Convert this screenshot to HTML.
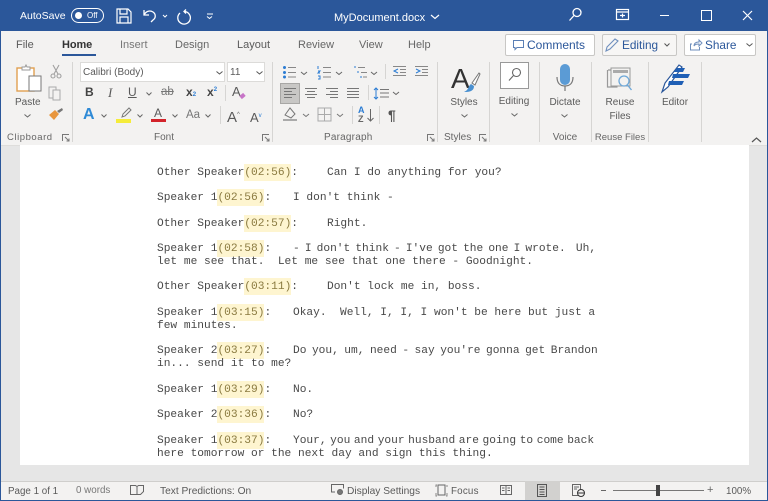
<!DOCTYPE html>
<html><head><meta charset="utf-8"><style>
html,body{margin:0;padding:0}
body{width:768px;height:501px;overflow:hidden;position:relative;background:#f3f2f1;font-family:"Liberation Sans",sans-serif;color:#555}
#w{position:absolute;left:0;top:0;width:768px;height:501px;filter:blur(.3px);overflow:hidden}
.a{position:absolute;white-space:nowrap}
.t{position:absolute;white-space:nowrap;font-size:10.5px;line-height:13px;color:#5a5a5a}
.c{transform:translateX(-50%)}
.sep{position:absolute;width:1px;background:#d6d5d3}
svg{position:absolute;overflow:visible}
.doc{position:absolute;left:157px;font:11.2px/13px "Liberation Mono",monospace;color:#484848;white-space:pre}
.doc b{font-weight:normal;background:#fef5d0;color:#8a7a40;padding:3px 0 2px}
.doc i{font-style:normal;position:absolute}
.wt{color:#fff}
.box{position:absolute;background:#fff;border:1px solid #c8c7c5;box-sizing:border-box}
</style></head><body><div id="w">
<!-- title bar -->
<div class="a" style="left:0;top:0;width:768px;height:31px;background:#2b579a"></div>
<div class="a wt" style="left:20px;top:9px;font-size:10.5px;line-height:14px">AutoSave</div>
<div class="a" style="left:71px;top:8px;width:33px;height:15px;border:1px solid #fff;border-radius:8px;box-sizing:border-box"></div>
<div class="a" style="left:75px;top:12px;width:7px;height:7px;background:#fff;border-radius:50%"></div>
<div class="a wt" style="left:87px;top:10px;font-size:8px;line-height:11px">Off</div>
<svg style="left:116px;top:8px" width="16" height="16" fill="none" stroke="#fff" stroke-width="1.2"><path d="M1 1h11l3 3v11H1zM4 1v5h7V1M4 15V9h8v6"/></svg>
<svg style="left:142px;top:8px" width="26" height="16" fill="none" stroke="#fff" stroke-width="1.3"><path d="M2 2v5h5M2 7c2-4 6-5 9-3 3 2 3 6 0 8l-2 2"/><path d="M21 7l2 2 2-2" stroke-width="1"/></svg>
<svg style="left:176px;top:8px" width="17" height="17" fill="none" stroke="#fff" stroke-width="1.3"><path d="M10 1.500l-2 2 2 2M8 3.500a6.300 6.300 0 1 1-4 1.500"/></svg>
<svg style="left:206px;top:13px" width="9" height="7" fill="none" stroke="#fff" stroke-width="1"><path d="M1 1h6M1 3.500l2.500 2 2.500-2"/></svg>
<div class="a wt" style="left:334px;top:11px;font-size:11px;line-height:14px">MyDocument.docx</div>
<svg style="left:430px;top:14px" width="10" height="6" fill="none" stroke="#fff" stroke-width="1.2"><path d="M1 1l4 3.500L9 1"/></svg>
<svg style="left:568px;top:7px" width="15" height="15" fill="none" stroke="#fff" stroke-width="1.3"><circle cx="9" cy="5.500" r="4"/><path d="M6 8.500L1.500 13.500"/></svg>
<svg style="left:616px;top:9px" width="14" height="12" fill="none" stroke="#fff" stroke-width="1.2"><rect x=".5" y=".5" width="12" height="10"/><path d="M.5 3h12M4 6.500h5M6.500 4.500v4"/></svg>
<div class="a" style="left:660px;top:15px;width:9px;height:1.3px;background:#fff"></div>
<div class="a" style="left:701px;top:10px;width:9px;height:9px;border:1.2px solid #fff"></div>
<svg style="left:742px;top:10px" width="11" height="11" stroke="#fff" stroke-width="1.2"><path d="M1 1l9 9M10 1l-9 9"/></svg>
<!-- tabs -->
<div class="a" style="left:1px;top:31px;width:766px;height:114px;background:#f3f2f1"></div>
<div class="t" style="left:16px;top:39px;font-size:11px">File</div>
<div class="t" style="left:62px;top:39px;font-size:11px;color:#333;font-weight:bold;letter-spacing:-.1px">Home</div>
<div class="a" style="left:62px;top:54px;width:34px;height:2px;background:#2b579a"></div>
<div class="t" style="left:120px;top:39px;font-size:11px;color:#777">Insert</div>
<div class="t" style="left:175px;top:39px;font-size:11px;color:#666">Design</div>
<div class="t" style="left:237px;top:39px;font-size:11px">Layout</div>
<div class="t" style="left:298px;top:39px;font-size:11px;color:#666">Review</div>
<div class="t" style="left:359px;top:39px;font-size:11px;color:#666">View</div>
<div class="t" style="left:408px;top:39px;font-size:11px;color:#666">Help</div>
<!-- top right buttons -->
<div class="box" style="left:505px;top:34px;width:90px;height:22px;border-radius:2px"></div>
<svg style="left:513px;top:40px" width="12" height="11" fill="none" stroke="#5a7fb5"><path d="M.5.5h10v7H4l-2 2v-2H.5z"/></svg>
<div class="t" style="left:527px;top:39px;font-size:12px;color:#2b579a">Comments</div>
<div class="box" style="left:602px;top:34px;width:75px;height:22px;border-radius:2px;background:#f7f6f5"></div>
<svg style="left:604px;top:37px" width="16" height="16" fill="none" stroke="#6f8fbd" stroke-width="1.1"><path d="M2 14l1-4 8-8 3 2-8 8z"/></svg>
<div class="t" style="left:622px;top:39px;font-size:11.8px;color:#2b579a">Editing</div>
<svg style="left:664px;top:43px" width="6" height="4" fill="none" stroke="#555"><path d="M.5.5L3 3l2.500-2.500"/></svg>
<div class="box" style="left:684px;top:34px;width:72px;height:22px;border-radius:2px"></div>
<svg style="left:690px;top:39px" width="13" height="12" fill="none" stroke="#6f8fbd"><path d="M2 5H.5v6h9V8M4 7c0-3 2-4 5-4V1l3 3-3 3V5C7 5 5 5 4 7z"/></svg>
<div class="t" style="left:705px;top:39px;font-size:11.8px;color:#2b579a">Share</div>
<svg style="left:746px;top:43px" width="7" height="4" fill="none" stroke="#555"><path d="M.5.5L3.500 3l3-2.500"/></svg>
<!-- ribbon: clipboard -->
<svg style="left:16px;top:65px" width="26" height="30"><rect x="1" y="3" width="17" height="23" fill="#fff" stroke="#e0a050" stroke-width="1.4"/><path d="M6 5V2h3l1-2 1 2h3v3z" fill="#fff" stroke="#9a9a9a"/><rect x="13" y="11" width="12" height="15" fill="#fff" stroke="#777"/></svg>
<div class="t" style="left:15px;top:96px;font-size:10px">Paste</div>
<svg style="left:24px;top:114px" width="7" height="4" fill="none" stroke="#666"><path d="M.5.5l3 2.500 3-2.500"/></svg>
<svg style="left:50px;top:64px" width="12" height="15" fill="none" stroke="#a0a0a0" stroke-width="1.1"><path d="M3 1l5 9M9 1L4 10"/><circle cx="3" cy="12" r="2"/><circle cx="9" cy="12" r="2"/></svg>
<svg style="left:48px;top:86px" width="15" height="15" fill="none" stroke="#aaa"><path d="M1 1h7v3h3v8H1z"/><path d="M5 4h7v10H5z" fill="#f3f2f1"/></svg>
<svg style="left:48px;top:107px" width="16" height="14"><path d="M1 8l6-5 4 4-5 6z" fill="#e8963e"/><path d="M9 4l5-3 1 2-4 3z" fill="#777"/></svg>
<div class="t" style="left:7px;top:131px;font-size:9.5px;letter-spacing:.55px;color:#666">Clipboard</div>
<svg style="left:62px;top:134px" width="8" height="8" fill="none" stroke="#777"><path d="M.5 7V.5H7M3 3l4 4M7 4.500V7H4.500"/></svg>
<div class="sep" style="left:72px;top:62px;height:80px"></div>
<!-- font -->
<div class="box" style="left:80px;top:62px;width:145px;height:20px;border-color:#dcdbd9"></div>
<div class="t" style="left:83px;top:66px;font-size:10px">Calibri (Body)</div>
<svg style="left:216px;top:71px" width="7" height="4" fill="none" stroke="#555"><path d="M.5.5l3 2.500 3-2.500"/></svg>
<div class="box" style="left:227px;top:62px;width:38px;height:20px;border-color:#dcdbd9"></div>
<div class="t" style="left:230px;top:66px;font-size:10px">11</div>
<svg style="left:256px;top:71px" width="7" height="4" fill="none" stroke="#555"><path d="M.5.5l3 2.500 3-2.500"/></svg>
<div class="t" style="left:85px;top:86px;font-size:12px;font-weight:bold;color:#444">B</div>
<div class="t" style="left:108px;top:86px;font-style:italic;font-family:'Liberation Serif',serif;font-size:13px">I</div>
<div class="t" style="left:128px;top:86px;font-size:12px;text-decoration:underline">U</div>
<svg style="left:146px;top:92px" width="6" height="4" fill="none" stroke="#666"><path d="M.5.5L3 3l2.500-2.500"/></svg>
<div class="t" style="left:161px;top:86px;font-size:11.5px;text-decoration:line-through;color:#777">ab</div>
<div class="t" style="left:186px;top:86px;font-size:12px;font-weight:bold;color:#444">x<span style="font-size:6px;color:#2b7cd3">2</span></div>
<div class="t" style="left:207px;top:86px;font-size:12px;font-weight:bold;color:#444">x<sup style="font-size:6px;color:#2b7cd3;line-height:0">2</sup></div>
<div class="sep" style="left:225px;top:85px;height:16px"></div>
<div class="t" style="left:232px;top:85px;font-size:13px">A</div>
<div class="a" style="left:240px;top:94px;width:5px;height:4px;background:#c774c7;transform:rotate(-40deg)"></div>
<div class="t" style="left:83px;top:106px;font-size:16px;line-height:18px;font-weight:bold;color:#2f8ad6">A</div>
<svg style="left:101px;top:114px" width="6" height="4" fill="none" stroke="#666"><path d="M.5.5L3 3l2.500-2.500"/></svg>
<svg style="left:119px;top:107px" width="14" height="11" fill="none" stroke="#777"><path d="M3 10l1-3 6-6 2 2-6 6z"/></svg>
<div class="a" style="left:116px;top:119px;width:15px;height:4px;background:#f5ec3a"></div>
<svg style="left:137px;top:114px" width="6" height="4" fill="none" stroke="#666"><path d="M.5.5L3 3l2.500-2.500"/></svg>
<div class="t" style="left:154px;top:106px;font-size:12px;line-height:14px">A</div>
<div class="a" style="left:151px;top:119px;width:15px;height:3px;background:#d3232a"></div>
<svg style="left:172px;top:114px" width="6" height="4" fill="none" stroke="#666"><path d="M.5.5L3 3l2.500-2.500"/></svg>
<div class="t" style="left:186px;top:109px;font-size:11.5px;color:#777">Aa</div>
<svg style="left:205px;top:114px" width="6" height="4" fill="none" stroke="#666"><path d="M.5.5L3 3l2.500-2.500"/></svg>
<div class="sep" style="left:220px;top:106px;height:18px"></div>
<div class="t" style="left:227px;top:107px;font-size:15px;line-height:16px">A<span style="font-size:6px;vertical-align:6px;color:#666">^</span></div>
<div class="t" style="left:250px;top:109px;font-size:13px;line-height:14px">A<span style="font-size:6px;vertical-align:5px;color:#2b7cd3">v</span></div>
<div class="t" style="left:154px;top:131px;font-size:10px;color:#666">Font</div>
<svg style="left:262px;top:134px" width="8" height="8" fill="none" stroke="#777"><path d="M.5 7V.5H7M3 3l4 4M7 4.500V7H4.500"/></svg>
<div class="sep" style="left:272px;top:62px;height:80px"></div>
<!-- paragraph row 1 -->
<svg style="left:282px;top:64px" width="120" height="16" fill="none" stroke="#888"><path d="M6 3.500h8M6 8.500h8M6 13h8M41 3.500h8M41 8.500h8M41 13h8M76 3.500h7M79 8.500h6M81 13h4"/><circle cx="2.500" cy="3.500" r="1.500" fill="#2b7cd3" stroke="none"/><circle cx="2.500" cy="8.500" r="1.500" fill="#2b7cd3" stroke="none"/><circle cx="2.500" cy="13" r="1.500" fill="#2b7cd3" stroke="none"/><path d="M36 2v3M36 7h2l-2 2h2M36 12h2v3h-2M72 3h2M75 8h2M78 13h2" stroke="#2b7cd3"/><path d="M19 8l3 2.500 3-2.500M54 8l3 2.500 3-2.500M89 8l3 2.500 3-2.500" stroke="#666"/></svg>
<div class="sep" style="left:385px;top:64px;height:15px"></div>
<svg style="left:393px;top:65px" width="36" height="14" fill="none" stroke="#888"><path d="M0 1.500h13M7 4.500h6M7 7.500h6M0 10.500h13M22 1.500h13M29 4.500h6M29 7.500h6M22 10.500h13"/><path d="M5 4L1 6l4 2M23 4l4 2-4 2" stroke="#2b7cd3"/></svg>
<!-- paragraph row 2 -->
<div class="a" style="left:280px;top:83px;width:20px;height:21px;background:#c8c7c5;border:1px solid #a8a7a5;box-sizing:border-box"></div>
<svg style="left:284px;top:88px" width="120" height="14" fill="none" stroke="#777"><path d="M0 .5h12M0 3.500h8M0 6.500h12M0 9.500h8"/><path d="M21 .5h12M23 3.500h8M21 6.500h12M23 9.500h8M42 .5h12M46 3.500h8M42 6.500h12M46 9.500h8M63 .5h12M63 3.500h12M63 6.500h12M63 9.500h12M96 1.500h9M96 5h9M96 9h9"/><path d="M92 0v11M90 2l2-2 2 2M90 9l2 2 2-2" stroke="#2b7cd3"/><path d="M109 4l3 2.500 3-2.500" stroke="#666"/></svg>
<div class="sep" style="left:368px;top:85px;height:15px"></div>
<!-- paragraph row 3 -->
<svg style="left:282px;top:106px" width="65" height="18" fill="none" stroke="#777"><path d="M3 9l5-7 5 6-4 4z"/><path d="M1 14h14" stroke="#aaa" stroke-width="2"/><path d="M21 8l3 2.500 3-2.500"/><path d="M36 2h13v13H36zM42.500 2v13M36 8.500h13" stroke="#aaa"/><path d="M55 8l3 2.500 3-2.500"/></svg>
<div class="sep" style="left:352px;top:106px;height:18px"></div>
<div class="sep" style="left:379px;top:106px;height:18px"></div>
<div class="t" style="left:358px;top:106px;font-size:9px;line-height:9px;font-weight:bold;color:#2b7cd3">A</div>
<div class="t" style="left:358px;top:115px;font-size:9px;line-height:9px;font-weight:bold;color:#666">Z</div>
<svg style="left:367px;top:109px" width="7" height="14" fill="none" stroke="#666"><path d="M3.500 0v12M.5 9l3 3 3-3"/></svg>
<div class="t" style="left:388px;top:107px;font-size:14px;line-height:16px;font-weight:bold;color:#555">¶</div>
<div class="t" style="left:324px;top:131px;font-size:10px;letter-spacing:.2px;color:#666">Paragraph</div>
<svg style="left:427px;top:134px" width="8" height="8" fill="none" stroke="#777"><path d="M.5 7V.5H7M3 3l4 4M7 4.500V7H4.500"/></svg>
<div class="sep" style="left:437px;top:62px;height:80px"></div>
<!-- styles -->
<div class="t" style="left:451px;top:64px;font-size:28px;line-height:30px;color:#333">A</div>
<svg style="left:463px;top:72px" width="18" height="22"><path d="M9 11l7-10 1 1-5 11z" fill="#fff" stroke="#777"/><path d="M1 20c4 0 10 0 10-6l-3-2C5 14 6 18 1 20z" fill="#4a90d0"/></svg>
<div class="t c" style="left:464px;top:96px;font-size:10px">Styles</div>
<svg style="left:461px;top:114px" width="7" height="4" fill="none" stroke="#666"><path d="M.5.5l3 2.500 3-2.500"/></svg>
<div class="t" style="left:444px;top:131px;font-size:10px;color:#666">Styles</div>
<svg style="left:479px;top:134px" width="8" height="8" fill="none" stroke="#777"><path d="M.5 7V.5H7M3 3l4 4M7 4.500V7H4.500"/></svg>
<div class="sep" style="left:489px;top:62px;height:80px"></div>
<!-- editing -->
<div class="box" style="left:500px;top:62px;width:29px;height:27px;border-color:#999"></div>
<svg style="left:507px;top:67px" width="15" height="15" fill="none" stroke="#666" stroke-width="1.1"><circle cx="9.500" cy="5.500" r="4"/><path d="M6.500 8.500L2 13.500"/></svg>
<div class="t c" style="left:514px;top:95px;font-size:10px">Editing</div>
<svg style="left:511px;top:113px" width="7" height="4" fill="none" stroke="#666"><path d="M.5.5l3 2.500 3-2.500"/></svg>
<div class="sep" style="left:539px;top:62px;height:80px"></div>
<!-- dictate -->
<svg style="left:555px;top:64px" width="20" height="28" fill="none"><rect x="5" y="0" width="10" height="21" rx="5" fill="#5b9bd5"/><path d="M2 13c0 6 3 9 8 9s8-3 8-9" stroke="#777" stroke-width="1.2"/><path d="M10 22v5" stroke="#777" stroke-width="1.2"/></svg>
<div class="t c" style="left:565px;top:96px;font-size:10px">Dictate</div>
<svg style="left:561px;top:114px" width="7" height="4" fill="none" stroke="#666"><path d="M.5.5l3 2.500 3-2.500"/></svg>
<div class="t c" style="left:565px;top:131px;font-size:10px;color:#666">Voice</div>
<div class="sep" style="left:591px;top:62px;height:80px"></div>
<!-- reuse -->
<svg style="left:607px;top:67px" width="29" height="27" fill="none" stroke="#999"><path d="M1 3h21M.5 3v17h10" stroke-width="1.2"/><rect x="4" y="1" width="19" height="18" fill="#f3f2f1" stroke="#999"/><rect x="6" y="3" width="15" height="3" fill="#aaa" stroke="none"/><circle cx="17" cy="14" r="5" stroke="#6fa8d8" stroke-width="1.3"/><path d="M20.500 18l4 5" stroke="#6fa8d8" stroke-width="1.4"/></svg>
<div class="t c" style="left:620px;top:96px;font-size:10px">Reuse</div>
<div class="t c" style="left:620px;top:110px;font-size:10px">Files</div>
<div class="t c" style="left:620px;top:131px;font-size:9.5px;color:#666">Reuse Files</div>
<div class="sep" style="left:648px;top:62px;height:80px"></div>
<!-- editor -->
<svg style="left:661px;top:64px" width="30" height="29"><path d="M1 28l3-9L18 1l3 2L7 23z" fill="#fff" stroke="#2b579a" stroke-width="1.2"/><path d="M12 10h17l-2 4H11zM8 17h15l-2 4H7zM16 4l8 0-2 4h-9z" fill="#1f5fb5"/></svg>
<div class="t c" style="left:675px;top:96px;font-size:10px">Editor</div>
<div class="sep" style="left:701px;top:62px;height:80px"></div>
<svg style="left:751px;top:136px" width="11" height="7" fill="none" stroke="#555" stroke-width="1.2"><path d="M1 6l4.500-4L10 6"/></svg>
<!-- document area -->
<div class="a" style="left:1px;top:145px;width:766px;height:1px;background:#dedddb"></div>
<div class="a" style="left:1px;top:146px;width:766px;height:335px;background:#e6e6e6"></div>
<div class="a" style="left:20px;top:145px;width:729px;height:320px;background:#fff"></div>
<div class="doc" style="top:167px">Other Speaker<b>(02:56)</b>:<i style="left:170px">Can I do anything for you?</i></div>
<div class="doc" style="top:192px">Speaker 1<b>(02:56)</b>:<i style="left:136px">I don't think -</i></div>
<div class="doc" style="top:218px">Other Speaker<b>(02:57)</b>:<i style="left:170px">Right.</i></div>
<div class="doc" style="top:243px">Speaker 1<b>(02:58)</b>:<i style="left:136px;word-spacing:-1.6px">- I don't think - I've got the one I wrote.  Uh,</i>
let me see that.  Let me see that one there - Goodnight.</div>
<div class="doc" style="top:281px">Other Speaker<b>(03:11)</b>:<i style="left:170px">Don't lock me in, boss.</i></div>
<div class="doc" style="top:307px">Speaker 1<b>(03:15)</b>:<i style="left:136px">Okay.  Well, I, I, I won't be here but just a</i>
few minutes.</div>
<div class="doc" style="top:345px">Speaker 2<b>(03:27)</b>:<i style="left:136px;word-spacing:-1.2px">Do you, um, need - say you're gonna get Brandon</i>
in... send it to me?</div>
<div class="doc" style="top:384px">Speaker 1<b>(03:29)</b>:<i style="left:136px">No.</i></div>
<div class="doc" style="top:409px">Speaker 2<b>(03:36)</b>:<i style="left:136px">No?</i></div>
<div class="doc" style="top:435px">Speaker 1<b>(03:37)</b>:<i style="left:136px;word-spacing:-3.1px">Your, you and your husband are going to come back</i>
here tomorrow or the next day and sign this thing.</div>
<!-- status bar -->
<div class="a" style="left:1px;top:481px;width:766px;height:19px;background:#f3f2f1;border-top:1px solid #cfcecc;box-sizing:border-box"></div>
<div class="t" style="left:8px;top:485px;font-size:9.8px">Page 1 of 1</div>
<div class="t" style="left:76px;top:484px;font-size:9.8px;color:#777">0 words</div>
<svg style="left:130px;top:485px" width="14" height="11" fill="none" stroke="#666"><path d="M.5.5h5l1.500 1 1.500-1h5v6l-3 3H7L5.500 9.500H.5zM7 1.500v8"/></svg>
<div class="t" style="left:160px;top:485px;font-size:10.2px">Text Predictions: On</div>
<svg style="left:331px;top:484px" width="14" height="12" fill="none" stroke="#666"><path d="M4 8H.5V.5h12v4"/><circle cx="9" cy="8" r="2.500" fill="#777"/></svg>
<div class="t" style="left:347px;top:485px;font-size:10.2px">Display Settings</div>
<svg style="left:435px;top:484px" width="13" height="13" fill="none" stroke="#666"><path d="M3 1h7v10H3z"/><path d="M1 3v-2h1M1 9v3h1M12 3v-2M12 9v3h-1" stroke="#888"/></svg>
<div class="t" style="left:451px;top:485px;font-size:9.8px;letter-spacing:.2px">Focus</div>
<svg style="left:500px;top:484px" width="12" height="12" fill="none" stroke="#666"><path d="M.5 1.500h11v9H.5zM6 1.500v9M2 4h2.500M2 6.500h2.500M7.500 4H10M7.500 6.500H10"/></svg>
<div class="a" style="left:525px;top:481px;width:35px;height:19px;background:#d2d1cf"></div>
<svg style="left:537px;top:484px" width="11" height="13" fill="none" stroke="#555"><path d="M.5.5h9v12h-9zM2.500 3h5M2.500 5.500h5M2.500 8h5M2.500 10.500h5"/></svg>
<svg style="left:572px;top:484px" width="13" height="13" fill="none" stroke="#666"><path d="M.5.5h8v11h-8zM2 3h5M2 5h3"/><circle cx="9" cy="9" r="3.500" fill="#f3f2f1" stroke="#333"/><path d="M5.500 9h7" stroke="#333"/></svg>
<div class="a" style="left:601px;top:490px;width:5px;height:1px;background:#666"></div>
<div class="a" style="left:613px;top:490px;width:91px;height:1px;background:#777"></div>
<div class="a" style="left:656px;top:485px;width:4px;height:11px;background:#444"></div>
<div class="t" style="left:707px;top:484px;font-size:11px;color:#666">+</div>
<div class="t" style="left:726px;top:485px;font-size:9.8px">100%</div>
<!-- window edges -->
<div class="a" style="left:0;top:31px;width:1px;height:470px;background:#2b579a"></div>
<div class="a" style="left:767px;top:31px;width:1px;height:470px;background:#2b579a"></div>
<div class="a" style="left:0;top:500px;width:768px;height:1px;background:#2b579a"></div>
</div></body></html>
